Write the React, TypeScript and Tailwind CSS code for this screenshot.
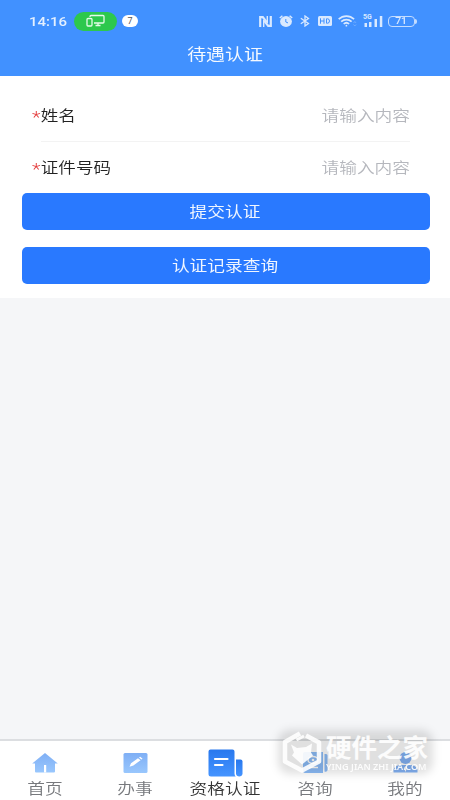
import React from "react";
import clsx from "clsx";

interface WideTextProps {
  children: React.ReactNode;
  className?: string;
}

// Glyphs on this screen are wider than they are tall
const WideText: React.FC<WideTextProps> = ({ children, className }) => (
  <span className={clsx("block whitespace-nowrap scale-x-[1.18]", className)}>{children}</span>
);

const StatusBar: React.FC = () => (
  <div className="flex h-[42px] items-center justify-between pl-[29px] pr-[33px] text-[#d9e9ff]">
    <div className="flex items-center">
      <span className="w-[38px] origin-left scale-x-[1.11] font-[Roboto] text-[13.5px] font-medium text-[#e4f0ff]">
        14:16
      </span>
      <div className="ml-[7px] flex h-[19px] w-[43px] items-center justify-center rounded-full bg-[#2dc84d]">
        <svg width="19" height="14" viewBox="0 0 19 14" fill="none" stroke="#e5fbe9" strokeWidth="1.3">
          <rect x="1" y="4.500" width="5" height="7.500" rx="1" />
          <path d="M4 3V2.500a1 1 0 0 1 1-1h12a1 1 0 0 1 1 1v5.500a1 1 0 0 1-1 1H8M12 9v2.500M9.500 11.500h5" />
        </svg>
      </div>
      <div className="ml-[5px] flex h-[12px] w-[16px] items-center justify-center rounded-full bg-white font-[Roboto] text-[9px] leading-[12px] text-[#555]">
        7
      </div>
    </div>

    <div className="flex items-center">
      {/* NFC */}
      <svg width="13" height="11" viewBox="0 0 13 11" fill="none" stroke="currentColor" strokeWidth="2.200">
        <path d="M1.200 11V1.100h2.600L8 6.500M11.800 0v9.900H9.200L5 4.500" />
        <path d="M4.700 4v7M8.300 0v7" strokeWidth="1.400" />
      </svg>
      {/* Alarm */}
      <svg className="ml-[7px]" width="14" height="12" viewBox="0 0 14 12">
        <ellipse cx="7" cy="6.500" rx="5.900" ry="5.400" fill="currentColor" />
        <path d="M.8 3 3.400.7M13.200 3 10.600.7" stroke="currentColor" strokeWidth="1.500" />
        <path d="M6.800 4v3l2.200.9" stroke="#4191ff" fill="none" />
      </svg>
      {/* Bluetooth */}
      <svg className="ml-[7px]" width="10" height="12" viewBox="0 0 10 12" fill="none" stroke="currentColor" strokeWidth="1.300">
        <path d="m.8 3.200 7.700 5.300L5 11V1l3.500 2.500L.8 8.800" />
      </svg>
      <svg className="ml-[8px]" width="14" height="10" viewBox="0 0 14 10">
        <rect width="14" height="10" rx="1.500" fill="currentColor" />
        <path d="M2.500 2.300v5.400M6 2.300v5.400M2.500 5H6M8.500 2.800v4.400h1a2 2.200 0 0 0 0-4.400z" fill="none" stroke="#4191ff" />
      </svg>
      {/* Wifi */}
      <svg className="ml-[6px]" width="19" height="12" viewBox="0 0 19 12" fill="none" stroke="currentColor" strokeWidth="1.700">
        <path d="M.7 4.200c4.400-4.200 11-4.200 15.400 0M3.200 6.700c3-2.800 7.400-2.800 10.400 0M5.700 9c1.600-1.500 3.800-1.500 5.400 0" />
        <circle cx="8.400" cy="10.700" r=".9" fill="currentColor" stroke="none" />
        <path d="m15.500 8 1.300-1.500L18.100 8M15.500 9.500l1.300 1.500 1.300-1.500" strokeWidth=".7" opacity=".4" />
      </svg>
      {/* Signal */}
      <div className="relative ml-[6px] h-[12px] w-[20px]">
        <svg width="20" height="12" viewBox="0 0 20 12" fill="currentColor">
          <path d="M1.500 8h2.500v4H1.500zM6 7h2.500v5H6zM11.500 4h2.500v8h-2.500zM16.800 1h2.500v11h-2.500z" />
        </svg>
        <span className="absolute -top-[1px] left-0 font-[Roboto] text-[7px] font-bold leading-[7px]">5G</span>
      </div>
      {/* Battery */}
      <div className="ml-[5px] flex items-center">
        <div className="flex h-[11px] w-[27px] items-center justify-center rounded-[4px] border border-[#c3dcff] font-[Roboto] text-[9px] font-medium leading-[9px]">
          <span className="pt-px scale-x-[1.17]">71</span>
        </div>
        <div className="h-[5px] w-[2px] rounded-r bg-[#c3dcff]" />
      </div>
    </div>
  </div>
);

const fields = ["姓名", "证件号码"];

const HomeIcon = () => (
  <svg width="26" height="20" viewBox="0 0 26 20">
    <path d="M13 0 25.800 10.500H23V18.500a1 1 0 0 1-1 1H4a1 1 0 0 1-1-1V10.500H.2z" fill="url(#soft)" />
    <path d="M12 12h2.200v7.500H12z" fill="white" />
  </svg>
);

const EditIcon = () => (
  <svg width="25" height="20" viewBox="0 0 25 20">
    <rect x=".5" width="24" height="20" rx="1.500" fill="url(#soft)" />
    <path d="m6.500 13.700 1.500-3.500 7-5 2.600 2-7.200 5.200zM16 4.500l1.200-.8 2.400 2-1.200.9z" fill="white" />
  </svg>
);

const CertIcon = () => (
  <svg width="35" height="28" viewBox="0 0 35 28">
    <path d="M2.500.5h22a2 2 0 0 1 2 2v22c0 1.200.4 2.200 1.200 3H3a2.500 2.500 0 0 1-2.500-2.500V2.500a2 2 0 0 1 2-2z" fill="url(#strong)" />
    <path d="M28 10.500h4.500a2 2 0 0 1 2 2v12c0 4-6.500 4-6.500 0z" fill="url(#strong)" />
    <path d="M7 10h12.500M7 16h7.500" stroke="white" strokeWidth="2.200" strokeLinecap="round" />
  </svg>
);

const ConsultIcon = () => (
  <svg width="25" height="21" viewBox="0 0 25 21">
    <path d="M2 0h18v21H2a2 2 0 0 1-2-2V2a2 2 0 0 1 2-2zM21.500 2h1.500a1.500 1.500 0 0 1 1.500 1.500V18a2 2 0 0 1-3 1.500z" fill="#8dbdf9" />
    <ellipse cx="10" cy="8" rx="5" ry="3.500" fill="none" stroke="white" strokeWidth="1.500" />
    <circle cx="10" cy="8" r="1.300" fill="white" />
    <path d="M6 15.500h9" stroke="white" strokeWidth="1.500" />
  </svg>
);

const MineIcon = () => (
  <svg width="25" height="21" viewBox="0 0 25 21" fill="#84b3f6">
    <circle cx="12.500" cy="6" r="6" />
    <path d="M.5 20.500v-2c0-3 3-5.500 7-5.500h10c4 0 7 2.500 7 5.500v2z" />
    <path d="m12.500 14 1.500 2-1.500 4-1.500-4z" fill="white" />
  </svg>
);

const tabs = [
  { name: "首页", icon: <HomeIcon /> },
  { name: "办事", icon: <EditIcon /> },
  { name: "资格认证", icon: <CertIcon />, active: true },
  { name: "咨询", icon: <ConsultIcon /> },
  { name: "我的", icon: <MineIcon /> },
];

const Watermark: React.FC = () => (
  <div className="absolute left-[282px] top-[730px] flex h-[44px] items-center text-white/90">
    <div className="absolute -left-1 -right-1 inset-y-0 rounded-xl bg-black/12 blur-[4px]" />
    <svg className="relative shrink-0" width="40" height="44" viewBox="0 0 40 44">
      <path d="M18 3.500 3 12v19.500l17 9 17-9v-19L24 5.500" fill="none" stroke="currentColor" strokeWidth="4.500" strokeLinejoin="round" />
      <path d="m14.500 10 7.500-4" stroke="currentColor" strokeWidth="3" />
      <path d="m9 14.500 6 3.500 9-1 6-3.500-1 9 2 3-11 9-10-9 2-3z" fill="currentColor" />
    </svg>
    <div className="relative ml-[4px] flex h-[44px] w-[103px] flex-col pt-[3px]">
      <div className="h-[26px] whitespace-nowrap text-[25.5px] font-bold leading-[26px]">硬件之家</div>
      <div className="mt-[3px] h-[10px] origin-left whitespace-nowrap font-['Noto_Sans'] text-[9.5px] font-semibold leading-[10px] scale-x-[0.96]">
        YING JIAN ZHI JIA.COM
      </div>
    </div>
  </div>
);

export default function App() {
  return (
    <div className="relative flex h-[800px] w-[450px] flex-col overflow-hidden bg-[#f5f6f8] font-['Noto_Sans_CJK_SC',sans-serif] text-[15px]">
      <svg className="absolute h-0 w-0">
        <defs>
          <linearGradient id="soft" x1="0" y1="0" x2="0" y2="1">
            <stop stopColor="#7faff5" />
            <stop offset="1" stopColor="#99c7fd" />
          </linearGradient>
          <linearGradient id="strong" x1="0" y1="0" x2="0" y2="1">
            <stop stopColor="#2878ee" />
            <stop offset="1" stopColor="#4594ff" />
          </linearGradient>
        </defs>
      </svg>

      {/* Header */}
      <header className="h-[76px] shrink-0 bg-[#4191ff]">
        <StatusBar />
        <h1 className="flex h-[22px] items-center justify-center text-[#f4f9ff]">
          <WideText className="text-[16px]">待遇认证</WideText>
        </h1>
      </header>

      {/* Form */}
      <main className="h-[222px] shrink-0 bg-white pl-[22px] pr-[20.5px] pt-[14px]">
        {fields.map((field, i) => (
          <label
            key={field}
            className={clsx(
              "ml-[19px] mr-[19.5px] flex items-center justify-between",
              i === 0 ? "h-[52px] border-b border-[#f3f3f3]" : "h-[51px]"
            )}
          >
            <span className="-ml-[9px] flex origin-left items-center font-[350] text-[#222] scale-x-[1.17]">
              <span className="w-[7.5px] pt-[3px] font-[Roboto] text-[17px] leading-[17px] text-[#e33b3b]">*</span>
              {field}
            </span>
            <input
              className="w-40 origin-right bg-transparent text-right font-[350] outline-none scale-x-[1.18] placeholder:text-[#b5b7bd]"
              placeholder="请输入内容"
            />
          </label>
        ))}
        <div className="flex flex-col gap-[16.5px]">
          <button className="flex h-[37px] items-center justify-center rounded-[5px] bg-[#2979ff] pr-px text-[#f0f6ff]">
            <WideText>提交认证</WideText>
          </button>
          <button className="flex h-[37px] items-center justify-center rounded-[5px] bg-[#2979ff] pr-px text-[#f0f6ff]">
            <WideText>认证记录查询</WideText>
          </button>
        </div>
      </main>

      {/* Bottom tabs */}
      <nav className="mt-auto grid h-[61px] grid-cols-5 border-t-2 border-[#dcdee1] bg-white">
        {tabs.map((tab) => (
          <div key={tab.name} className="flex flex-col items-center">
            <div className="flex h-[37px] items-center justify-center pt-[6px]">{tab.icon}</div>
            <WideText className={clsx("font-[350] leading-[20px]", tab.active ? "text-[#333]" : "text-[#77797d]")}>
              {tab.name}
            </WideText>
          </div>
        ))}
      </nav>

      <Watermark />
    </div>
  );
}
